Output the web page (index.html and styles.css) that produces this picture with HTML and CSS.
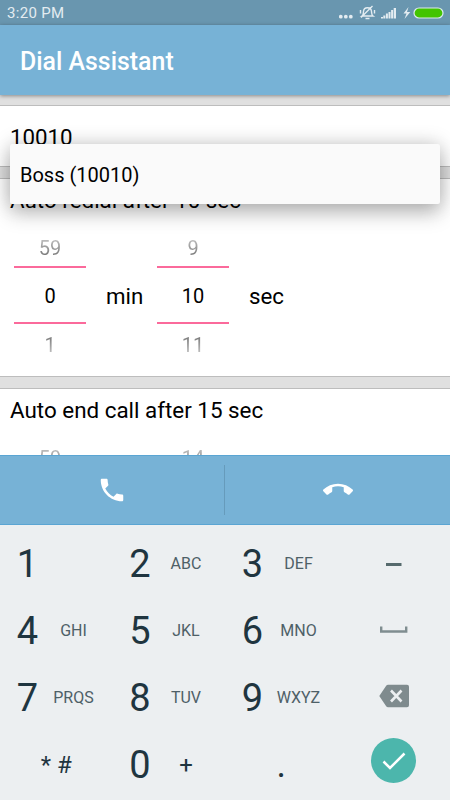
FILE: index.html
```html
<!DOCTYPE html>
<html lang="en">
  <head>
    <meta charset="UTF-8" />
    <meta name="viewport" content="width=device-width, initial-scale=1.0" />
    <title>Dial Assistant</title>
    <link rel="stylesheet" href="styles.css">
  </head>
  <body>
    <div class="status-bar">
      <span class="time">3:20 PM</span>
      <svg class="status-icons" width="106" height="16" viewBox="0 0 106 16">
        <g fill="#e3ecf1">
          <circle cx="1.800" cy="11.700" r="1.900" />
          <circle cx="6.800" cy="11.700" r="1.900" />
          <circle cx="11.800" cy="11.700" r="1.900" />
          <path d="M42 13.500v-1.500h2v1.500zM44.300 13.500v-3h2v3zM46.900 13.500v-5h2v5zM49.500 13.500v-6.500h2v6.500zM52.100 13.500v-8.500h2v8.500zM54.700 13.500v-10.500h2.300v10.500z" />
          <path d="M69.500 2l-5 6.500h3l-2 5.500 5.800-7h-3.300z" />
        </g>
        <g fill="none" stroke="#e3ecf1" stroke-width="1.400">
          <path d="M23 11c1.500-1 1.300-3 1.500-4.500.4-5 7.600-5 8 0 .2 1.500 0 3.500 1.500 4.500zM22 12.500L33.500 1M26.500 13.500h4M21.500 5v3.500M35.500 5v3.500" />
        </g>
        <rect x="75" y="3" width="29" height="10" rx="5" fill="#43c400" stroke="#dce9ef" stroke-width="1.200" />
      </svg>
    </div>

    <header class="app-bar">
      <h1>Dial Assistant</h1>
    </header>

    <main class="content">
      <section class="card number-card">
        <div class="number">10010</div>
        <div class="suggestion">Boss (10010)</div>
      </section>

      <section class="card redial-card">
        <h2>Auto redial after 10 sec</h2>
        <div class="pickers">
          <div class="picker">
            <span class="prev">59</span>
            <span class="current">0</span>
            <span class="next">1</span>
          </div>
          <span class="unit">min</span>
          <div class="picker">
            <span class="prev">9</span>
            <span class="current">10</span>
            <span class="next">11</span>
          </div>
          <span class="unit">sec</span>
        </div>
      </section>

      <section class="card end-card">
        <h2>Auto end call after 15 sec</h2>
        <div class="pickers">
          <div class="picker">
            <span class="prev">59</span>
          </div>
          <span class="unit"></span>
          <div class="picker">
            <span class="prev">14</span>
          </div>
        </div>
      </section>
    </main>

    <div class="call-bar">
      <button class="call-button" aria-label="Call">
        <svg width="30" height="30" viewBox="0 0 24 24">
          <path fill="#fff" d="M6.620 10.790c1.440 2.830 3.760 5.140 6.590 6.590l2.200-2.200c.27-.27.67-.36 1.020-.24 1.120.37 2.330.57 3.570.57.550 0 1 .45 1 1V20c0 .55-.45 1-1 1-9.390 0-17-7.610-17-17 0-.55.450-1 1-1h3.500c.55 0 1 .45 1 1 0 1.250.2 2.450.57 3.570.110.350.030.740-.25 1.020l-2.200 2.200z" />
        </svg>
      </button>
      <button class="call-button" aria-label="End call">
        <svg width="30" height="30" viewBox="0 0 24 24">
          <path fill="#fff" d="M12 9c-1.600 0-3.150.25-4.600.72v3.100c0 .39-.23.74-.56.9-.98.490-1.870 1.120-2.660 1.850-.18.180-.43.280-.7.280-.28 0-.53-.11-.71-.29L.290 13.080c-.18-.17-.29-.42-.29-.7 0-.28.110-.53.290-.71C3.340 8.780 7.460 7 12 7s8.660 1.780 11.710 4.670c.18.180.29.430.29.710 0 .28-.11.530-.29.710l-2.480 2.480c-.18.180-.43.290-.71.290-.27 0-.52-.11-.7-.28-.79-.74-1.690-1.360-2.670-1.850-.33-.16-.56-.5-.56-.9v-3.100C15.150 9.250 13.600 9 12 9z" />
        </svg>
      </button>
    </div>

    <div class="keypad">
      <div class="key"><b>1</b></div>
      <div class="key"><b>2</b><span>ABC</span></div>
      <div class="key"><b>3</b><span>DEF</span></div>
      <div class="key icon-key">
        <svg width="30" height="20" viewBox="0 0 30 20">
          <path fill="#566a6d" d="M7 9h15.500v3H7z" />
        </svg>
      </div>

      <div class="key"><b>4</b><span>GHI</span></div>
      <div class="key"><b>5</b><span>JKL</span></div>
      <div class="key"><b>6</b><span>MNO</span></div>
      <div class="key icon-key">
        <svg width="30" height="20" viewBox="0 0 30 20">
          <path fill="none" stroke="#7f8d90" stroke-width="2.400" d="M2.200 5.500V10.500h25v-5" />
        </svg>
      </div>

      <div class="key"><b>7</b><span>PRQS</span></div>
      <div class="key"><b>8</b><span>TUV</span></div>
      <div class="key"><b>9</b><span>WXYZ</span></div>
      <div class="key icon-key">
        <svg class="backspace" width="32" height="24" viewBox="0 0 32 24">
          <path fill="#7f8b8e" d="M1.300 12L8 2q.8-1.300 2.200-1.300H29q2 0 2 2v18.600q0 2-2 2H10.200q-1.400 0-2.200-1.300z" />
          <path fill="none" stroke="#eceff1" stroke-width="2.600" d="M13 6.500l10.500 11M23.500 6.500L13 17.500" />
        </svg>
      </div>

      <div class="key symbol-key">* #</div>
      <div class="key"><b>0</b><span class="plus">+</span></div>
      <div class="key symbol-key dot">.</div>
      <div class="key icon-key">
        <div class="confirm">
          <svg width="45" height="45" viewBox="0 0 45 45">
            <path fill="none" stroke="#fff" stroke-width="2.500" d="M12.500 23.500l6.500 6.500L33.500 15.500" />
          </svg>
        </div>
      </div>
    </div>
  </body>
</html>
```

FILE: styles.css
```css
* {
  box-sizing: border-box;
}
body {
  margin: 0;
  width: 450px;
  height: 800px;
  display: flex;
  flex-direction: column;
  overflow: hidden;
  font-family: Roboto, sans-serif;
  background-color: #e0e0e0;
  color: #000;
}
.status-bar {
  height: 25px;
  flex: none;
  display: flex;
  align-items: center;
  justify-content: space-between;
  padding: 0 5px 0 7px;
  background-color: #6996af;
  color: #e3ecf1;
}
.time {
  font-size: 15px;
  line-height: 25px;
  letter-spacing: 0.3px;
  padding-top: 1px;
}
.app-bar {
  height: 70px;
  flex: none;
  padding-left: 20px;
  background-color: #77b2d6;
  box-shadow: 0 1px 4px rgba(0, 0, 0, 0.4);
  position: relative;
}
h1 {
  margin: 0;
  font-size: 24.9px;
  font-weight: 500;
  line-height: 73px;
  color: white;
}
.content {
  height: 360px;
  flex: none;
  padding-top: 10px;
  overflow: hidden;
}
.card {
  background: white;
  border-top: 1px solid #bdbdbd;
  border-bottom: 1px solid #bdbdbd;
  padding: 0 10px;
}
.number-card {
  position: relative;
  height: 62px;
  margin-bottom: 11px;
}
.number {
  font-size: 22.3px;
  line-height: 26px;
  padding-top: 18px;
}
/* autocomplete popup over the cards */
.suggestion {
  position: absolute;
  z-index: 2;
  top: 38px;
  left: 10px;
  width: 430px;
  height: 60px;
  padding-left: 10px;
  font-size: 20px;
  line-height: 62px;
  background: #fafafa;
  border-radius: 2px;
  box-shadow: 0 10px 20px rgba(0, 0, 0, 0.22), 0 0 20px rgba(0, 0, 0, 0.2);
}
.redial-card {
  height: 199px;
  margin-bottom: 11px;
}
.end-card {
  height: 199px;
}
h2 {
  margin: 0;
  padding-top: 8px;
  font-size: 22.4px;
  font-weight: normal;
  line-height: 26px;
}
.pickers {
  display: flex;
  align-items: flex-start;
  padding: 1px 0 0 4px;
}
.picker {
  width: 72px;
  height: 153px;
  display: flex;
  flex-direction: column;
  text-align: center;
  font-size: 20px;
}
.prev,
.next {
  color: transparent;
  -webkit-background-clip: text;
  background-clip: text;
}
.prev {
  height: 52px;
  line-height: 69px;
  background-image: linear-gradient(#ccc 22px, #777 42px);
}
.current {
  height: 58px;
  line-height: 57px;
  border-top: 2px solid #fb6a9b;
  border-bottom: 2px solid #fb6a9b;
}
.next {
  height: 43px;
  line-height: 42px;
  background-image: linear-gradient(#777 12px, #ccc 32px);
}
.unit {
  width: 71px;
  padding-left: 20px;
  font-size: 22.3px;
  line-height: 165px;
  height: 153px;
}
.call-bar {
  height: 70px;
  flex: none;
  display: flex;
  align-items: center;
  background-color: #77b2d6;
  border-top: 1px solid #5aa5d3;
  border-bottom: 1px solid #5aa5d3;
}
.call-button {
  width: 225px;
  height: 50px;
  padding: 0;
  border: none;
  background: none;
  display: flex;
  align-items: center;
  justify-content: center;
}
.call-button:first-child {
  border-right: 1px solid #669bbb;
}
.keypad {
  height: 275px;
  flex: none;
  display: grid;
  grid-template-columns: repeat(4, 112.5px);
  grid-template-rows: repeat(4, 67px);
  padding-top: 5px;
  background-color: #eceff1;
  color: #1f3540;
}
.key {
  display: flex;
  align-items: center;
  padding-left: 8px;
}
.key b {
  width: 39px;
  text-align: center;
  font-size: 38px;
  font-weight: normal;
}
.key span {
  width: 53px;
  text-align: center;
  font-size: 16px;
  color: #4e6067;
}
.key .plus {
  font-size: 24px;
  color: #1f3540;
}
.icon-key {
  justify-content: center;
  padding-left: 0;
}
.backspace {
  margin-bottom: 3px;
}
.symbol-key {
  justify-content: center;
  padding-left: 0;
  font-size: 24px;
}
.dot {
  font-size: 36px;
}
.confirm {
  width: 45px;
  height: 45px;
  margin-bottom: 8px;
  border-radius: 50%;
  background-color: #4cb6ac;
}
```
